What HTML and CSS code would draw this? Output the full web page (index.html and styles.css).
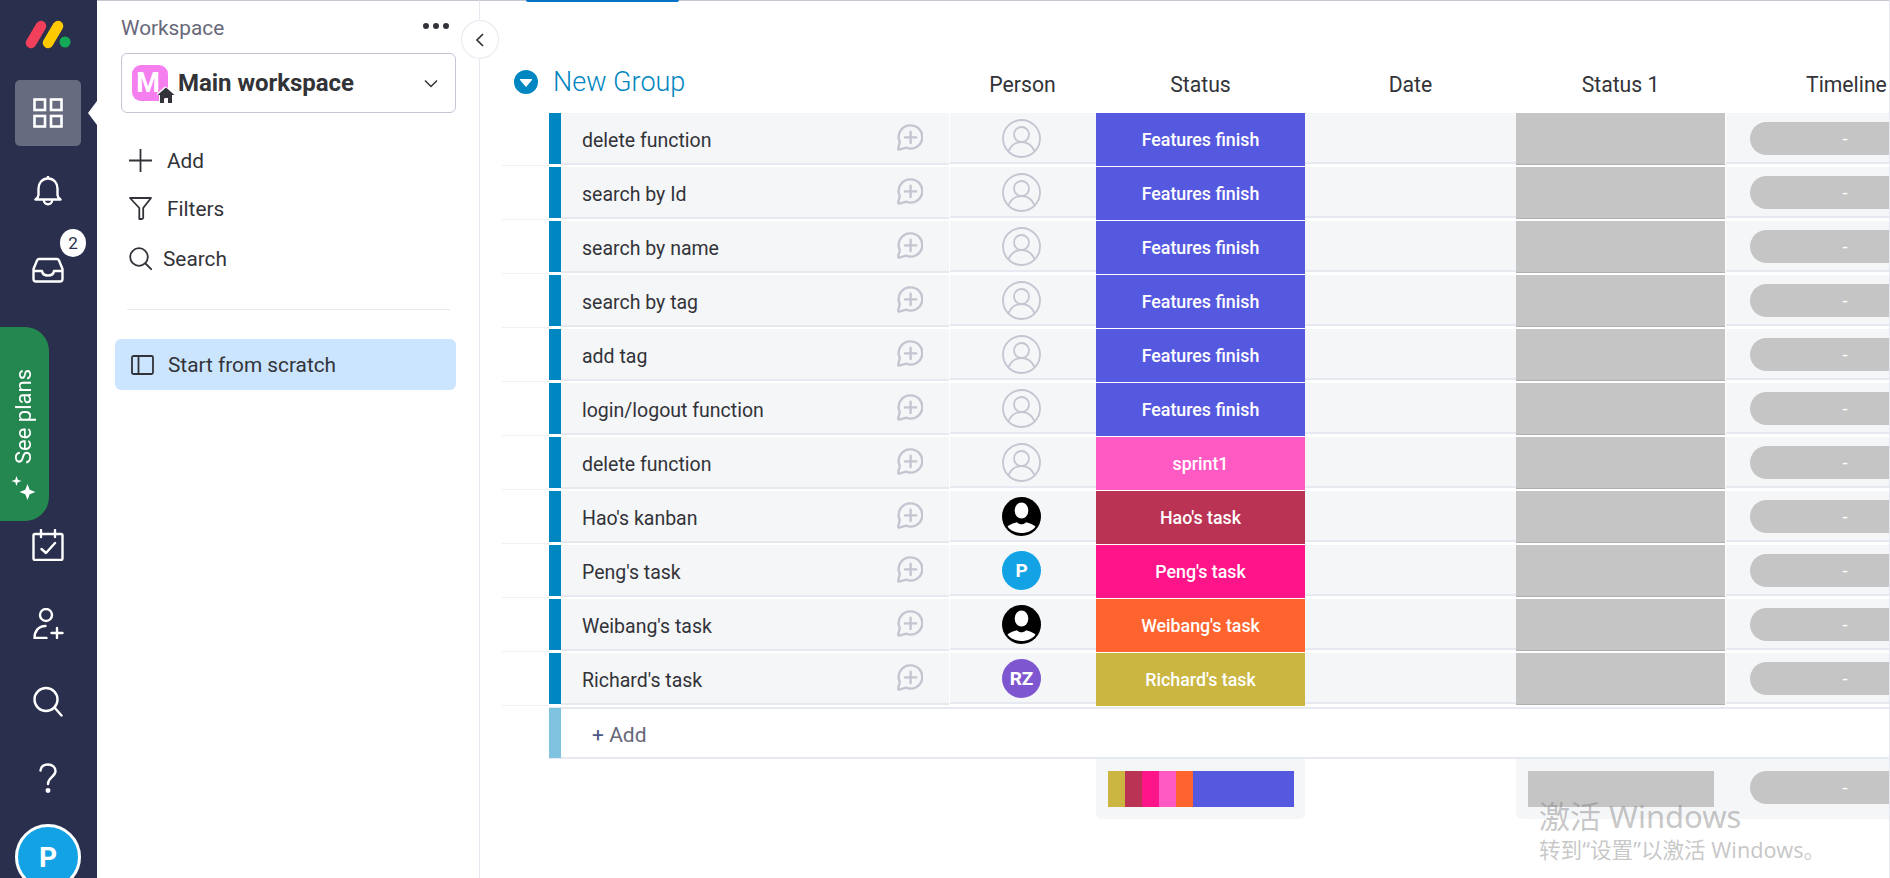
FILE: index.html
```html
<!DOCTYPE html>
<html lang="en">
<head>
<meta charset="utf-8">
<title>New Group</title>
<link rel="stylesheet" href="styles.css">
</head>
<body>
<svg class="defs" width="0" height="0" aria-hidden="true">
  <symbol id="i-comment" viewBox="0 0 27 27">
    <path d="M14.6 1.4a11.6 11.6 0 1 1-4.4 22.3L3.4 25.6c-.8.2-1.4-.4-1.2-1.1L3.8 18A11.6 11.6 0 0 1 14.6 1.4z" fill="none" stroke="#c3c6d0" stroke-width="2.4" stroke-linejoin="round"/>
    <path d="M14.6 7.8v11.2M9 13.4h11.2" stroke="#c3c6d0" stroke-width="2.4" stroke-linecap="round"/>
  </symbol>
  <symbol id="i-empty" viewBox="0 0 39 39">
    <circle cx="19.5" cy="19.5" r="18.5" fill="none" stroke="#c3c6d0" stroke-width="1.8"/>
    <circle cx="19.5" cy="15.5" r="7.5" fill="none" stroke="#c3c6d0" stroke-width="1.8"/>
    <path d="M6.5 32c3-6.500 8-9 13-9s10 2.500 13 9" fill="none" stroke="#c3c6d0" stroke-width="1.8"/>
  </symbol>
  <symbol id="i-photo" viewBox="0 0 39 39">
    <circle cx="19.500" cy="19.500" r="19.500" fill="#000"/>
    <ellipse cx="19.500" cy="13.500" rx="6.800" ry="8" fill="#fff"/>
    <path d="M5.500 29.500C9 27 13.500 25.500 15 25.300c2.500 2.700 6.500 2.700 9 0 1.500.2 6 1.700 9.500 4.200C31 33.500 25.500 36 19.500 36S8 33.500 5.500 29.500z" fill="#fff"/>
  </symbol>
</svg>

<div class="app">
  <nav class="rail">
    <svg class="logo" width="48" height="30" viewBox="0 0 48 30">
      <path d="M7 24L17 7" stroke="#f2405b" stroke-width="10.500" stroke-linecap="round"/>
      <path d="M24 24L34 7" stroke="#ffcb00" stroke-width="10.500" stroke-linecap="round"/>
      <circle cx="41" cy="23" r="5.500" fill="#14aa55"/>
    </svg>
    <div class="rail-item active">
      <svg width="30" height="30" viewBox="0 0 30 30" fill="none" stroke="#fff" stroke-width="2.600">
        <rect x="1.500" y="1.500" width="10.500" height="10.500"/><rect x="18" y="1.500" width="10.500" height="10.500"/>
        <rect x="1.500" y="18" width="10.500" height="10.500"/><rect x="18" y="18" width="10.500" height="10.500"/>
      </svg>
    </div>
    <div class="rail-item bell">
      <svg width="28" height="32" viewBox="0 0 28 32" fill="none" stroke="#fff" stroke-width="2.400" stroke-linejoin="round">
        <path d="M14 3.500c-6 0-9.500 4.500-9.500 10V20c0 1.500-1 3-3 4.500h25c-2-1.500-3-3-3-4.500v-6.500c0-5.500-3.500-10-9.500-10z"/>
        <path d="M14 1v2.500M9.800 24.800c0 6 8.400 6 8.400 0"/>
      </svg>
    </div>
    <div class="rail-item inbox">
      <svg width="32" height="26" viewBox="0 0 32 26" fill="none" stroke="#fff" stroke-width="2.400" stroke-linejoin="round">
        <path d="M7 2h18c1 0 1.500.5 2 1.500L30.500 12v10c0 1.500-1 2.500-2.500 2.500H4c-1.500 0-2.500-1-2.500-2.500V12L5 3.500C5.500 2.500 6 2 7 2z"/>
        <path d="M1.500 14h8.500c.5 3.500 2.500 4.500 6 4.500s5.500-1 6-4.500h8.500"/>
      </svg>
      <span class="badge">2</span>
    </div>
    <div class="plans">
      <span class="plans-text">See plans</span>
      <svg width="25" height="25" viewBox="0 0 25 25" fill="#fff">
        <path d="M16.500 8l2.200 5.800 5.800 2.200-5.800 2.200-2.200 5.800-2.200-5.800-5.800-2.200 5.800-2.200z"/>
        <path d="M5.500 0l1.300 3.700 3.700 1.300-3.700 1.300-1.300 3.700-1.300-3.700L.5 5l3.700-1.300z"/>
      </svg>
    </div>
    <div class="rail-item calendar">
      <svg width="32" height="32" viewBox="0 0 32 32" fill="none" stroke="#fff" stroke-width="2.400" stroke-linecap="round" stroke-linejoin="round">
        <rect x="1.500" y="5" width="29" height="26" rx="1.500"/>
        <path d="M9 1v7M23 1v7M9.500 20l4.500 4 9-10" />
      </svg>
    </div>
    <div class="rail-item invite">
      <svg width="31" height="31" viewBox="0 0 31 31" fill="none" stroke="#fff" stroke-width="2.400" stroke-linecap="round">
        <circle cx="13" cy="7" r="6"/>
        <path d="M1.500 30c0-7 4-12 11-12M2 30h11.500M24 20v10M18.500 25h11"/>
      </svg>
    </div>
    <div class="rail-item find">
      <svg width="30" height="31" viewBox="0 0 30 31" fill="none" stroke="#fff" stroke-width="2.400" stroke-linecap="round">
        <circle cx="13" cy="13.500" r="11.500"/><path d="M21.500 21.500l7 8"/>
      </svg>
    </div>
    <div class="rail-item help">
      <svg width="18" height="30" viewBox="0 0 18 30" fill="none" stroke="#fff" stroke-width="2.400" stroke-linecap="round">
        <path d="M1.500 7.500C2 3.500 5 1.500 9 1.500c4.500 0 7.500 3 7.500 6.500 0 6-7.500 6-7.500 13"/>
        <circle cx="9" cy="27.500" r="1.300" fill="#fff"/>
      </svg>
    </div>
    <div class="me">P</div>
  </nav>

  <aside class="side">
    <div class="side-head">
      <span class="side-title">Workspace</span>
      <span class="dots"><i></i><i></i><i></i></span>
    </div>
    <div class="picker">
      <span class="ws-icon">M
        <svg class="ws-home" width="18" height="16" viewBox="0 0 18 16">
          <path d="M9 .5L17.500 8H15v8h-4v-5H7v5H3V8H.5z" fill="#323338"/>
        </svg>
      </span>
      <span class="ws-name">Main workspace</span>
      <svg class="ws-chev" width="14" height="9" viewBox="0 0 14 9" fill="none" stroke="#323338" stroke-width="1.500"><path d="M1 1.500l6 6 6-6"/></svg>
    </div>
    <ul class="actions">
      <li class="action">
        <svg width="23" height="23" viewBox="0 0 23 23" stroke="#323338" stroke-width="1.800"><path d="M11.500 0v23M0 11.500h23"/></svg>
        <span>Add</span>
      </li>
      <li class="action">
        <svg width="23" height="23" viewBox="0 0 23 23" fill="none" stroke="#323338" stroke-width="1.800" stroke-linejoin="round"><path d="M1 1h21l-7.800 10v9.500c0 1-.5 1.500-1.500 1.500h-2.400V11z"/></svg>
        <span>Filters</span>
      </li>
      <li class="action action-search">
        <svg width="23" height="23" viewBox="0 0 23 23" fill="none" stroke="#323338" stroke-width="1.800" stroke-linecap="round"><circle cx="10" cy="10" r="8.800"/><path d="M16.500 16.500l6 6"/></svg>
        <span>Search</span>
      </li>
    </ul>
    <div class="divider"></div>
    <div class="board">
      <svg width="23" height="20" viewBox="0 0 23 20" fill="none" stroke="#323338" stroke-width="1.800"><rect x="1" y="1" width="21" height="18" rx="1.500"/><path d="M7.500 1v18"/></svg>
      <span>Start from scratch</span>
    </div>
    <button class="collapse" type="button" aria-label="Collapse">
      <svg width="10" height="14" viewBox="0 0 10 14" fill="none" stroke="#323338" stroke-width="1.700"><path d="M8 1L2 7l6 6"/></svg>
    </button>
  </aside>

  <main class="board-main">
    <div class="tab-mark"></div>
    <header class="group-head">
      <div class="group-label">
        <svg width="24" height="24" viewBox="0 0 24 24"><circle cx="12" cy="12" r="12" fill="#0086c0"/><path d="M6.500 9.500h11L12 16z" fill="#fff" stroke="#fff" stroke-width="1.200" stroke-linejoin="round"/></svg>
        <span class="group-name">New Group</span>
      </div>
      <span class="col">Person</span>
      <span class="col">Status</span>
      <span class="col">Date</span>
      <span class="col">Status 1</span>
      <span class="col">Timeline</span>
    </header>

    <div class="row">
      <div class="gutter"></div><div class="bar"></div>
      <div class="name"><span>delete function</span><svg width="27" height="27"><use href="#i-comment"/></svg></div>
      <div class="person"><svg width="39" height="39"><use href="#i-empty"/></svg></div>
      <div class="status s-feat">Features finish</div>
      <div class="date"></div><div class="grey"></div>
      <div class="time"><span class="pill">-</span></div>
    </div>
    <div class="row">
      <div class="gutter"></div><div class="bar"></div>
      <div class="name"><span>search by Id</span><svg width="27" height="27"><use href="#i-comment"/></svg></div>
      <div class="person"><svg width="39" height="39"><use href="#i-empty"/></svg></div>
      <div class="status s-feat">Features finish</div>
      <div class="date"></div><div class="grey"></div>
      <div class="time"><span class="pill">-</span></div>
    </div>
    <div class="row">
      <div class="gutter"></div><div class="bar"></div>
      <div class="name"><span>search by name</span><svg width="27" height="27"><use href="#i-comment"/></svg></div>
      <div class="person"><svg width="39" height="39"><use href="#i-empty"/></svg></div>
      <div class="status s-feat">Features finish</div>
      <div class="date"></div><div class="grey"></div>
      <div class="time"><span class="pill">-</span></div>
    </div>
    <div class="row">
      <div class="gutter"></div><div class="bar"></div>
      <div class="name"><span>search by tag</span><svg width="27" height="27"><use href="#i-comment"/></svg></div>
      <div class="person"><svg width="39" height="39"><use href="#i-empty"/></svg></div>
      <div class="status s-feat">Features finish</div>
      <div class="date"></div><div class="grey"></div>
      <div class="time"><span class="pill">-</span></div>
    </div>
    <div class="row">
      <div class="gutter"></div><div class="bar"></div>
      <div class="name"><span>add tag</span><svg width="27" height="27"><use href="#i-comment"/></svg></div>
      <div class="person"><svg width="39" height="39"><use href="#i-empty"/></svg></div>
      <div class="status s-feat">Features finish</div>
      <div class="date"></div><div class="grey"></div>
      <div class="time"><span class="pill">-</span></div>
    </div>
    <div class="row">
      <div class="gutter"></div><div class="bar"></div>
      <div class="name"><span>login/logout function</span><svg width="27" height="27"><use href="#i-comment"/></svg></div>
      <div class="person"><svg width="39" height="39"><use href="#i-empty"/></svg></div>
      <div class="status s-feat">Features finish</div>
      <div class="date"></div><div class="grey"></div>
      <div class="time"><span class="pill">-</span></div>
    </div>
    <div class="row">
      <div class="gutter"></div><div class="bar"></div>
      <div class="name"><span>delete function</span><svg width="27" height="27"><use href="#i-comment"/></svg></div>
      <div class="person"><svg width="39" height="39"><use href="#i-empty"/></svg></div>
      <div class="status s-sprint">sprint1</div>
      <div class="date"></div><div class="grey"></div>
      <div class="time"><span class="pill">-</span></div>
    </div>
    <div class="row">
      <div class="gutter"></div><div class="bar"></div>
      <div class="name"><span>Hao's kanban</span><svg width="27" height="27"><use href="#i-comment"/></svg></div>
      <div class="person"><svg width="39" height="39"><use href="#i-photo"/></svg></div>
      <div class="status s-hao">Hao's task</div>
      <div class="date"></div><div class="grey"></div>
      <div class="time"><span class="pill">-</span></div>
    </div>
    <div class="row">
      <div class="gutter"></div><div class="bar"></div>
      <div class="name"><span>Peng's task</span><svg width="27" height="27"><use href="#i-comment"/></svg></div>
      <div class="person"><span class="avatar av-p">P</span></div>
      <div class="status s-peng">Peng's task</div>
      <div class="date"></div><div class="grey"></div>
      <div class="time"><span class="pill">-</span></div>
    </div>
    <div class="row">
      <div class="gutter"></div><div class="bar"></div>
      <div class="name"><span>Weibang's task</span><svg width="27" height="27"><use href="#i-comment"/></svg></div>
      <div class="person"><svg width="39" height="39"><use href="#i-photo"/></svg></div>
      <div class="status s-wei">Weibang's task</div>
      <div class="date"></div><div class="grey"></div>
      <div class="time"><span class="pill">-</span></div>
    </div>
    <div class="row">
      <div class="gutter"></div><div class="bar"></div>
      <div class="name"><span>Richard's task</span><svg width="27" height="27"><use href="#i-comment"/></svg></div>
      <div class="person"><span class="avatar av-r">RZ</span></div>
      <div class="status s-rich">Richard's task</div>
      <div class="date"></div><div class="grey"></div>
      <div class="time"><span class="pill">-</span></div>
    </div>

    <div class="add-row">
      <div class="add-bar"></div>
      <div class="add-text"><b>+</b> Add</div>
    </div>

    <div class="summary">
      <div class="sum-status">
        <div class="stack">
          <i class="s-rich"></i><i class="s-hao"></i><i class="s-peng"></i><i class="s-sprint"></i><i class="s-wei"></i><i class="s-feat wide"></i>
        </div>
      </div>
      <div class="sum-date"></div>
      <div class="sum-rest">
        <div class="sum-grey"></div>
        <div class="time"><span class="pill">-</span></div>
      </div>
    </div>
  </main>
</div>

<div class="watermark">
  <div class="wm-1">激活 Windows</div>
  <div class="wm-2">转到“设置”以激活 Windows。</div>
</div>
</body>
</html>
```

FILE: styles.css
```css
* { box-sizing: border-box; }
html, body { margin: 0; height: 100%; overflow: hidden; background: #fff; }
body { font-family: Roboto, "Noto Sans", sans-serif; color: #323338; }
.defs { position: absolute; }
.app { display: flex; height: 878px; }

/* left rail */
.rail { width: 97px; flex: none; background: #292f4c; position: relative; display: flex; flex-direction: column; align-items: center; overflow: hidden; }
.logo { flex: none; margin-top: 19px; margin-left: -2px; }
.rail-item { flex: none; display: flex; align-items: center; justify-content: center; position: relative; width: 66px; margin-right: 1px; }
.rail-item.active { height: 66px; margin-top: 31px; background: #676b80; border-radius: 5px; }
.rail-item.active::after { content: ""; position: absolute; left: 73px; top: 21px; border: 12px solid transparent; border-left: 0; border-right: 9px solid #fff; }
.bell { height: 32px; margin-top: 29px; }
.inbox { height: 26px; margin-top: 50px; }
.badge { position: absolute; left: 45px; top: -28px; width: 26px; height: 28px; border-radius: 50%; background: #fff; color: #292f4c; font-size: 17px; display: flex; align-items: center; justify-content: center; }
.plans { position: absolute; left: 0; top: 327px; width: 49px; height: 194px; background: #258750; border-radius: 0 24px 24px 0; display: flex; flex-direction: column; align-items: center; justify-content: flex-end; padding: 0 3px 20px 0; color: #fff; }
.plans-text { writing-mode: vertical-rl; transform: rotate(180deg); font-size: 22px; margin-bottom: 12px; }
.calendar { margin-top: 246px; height: 32px; }
.invite { margin-top: 47px; height: 31px; }
.find { margin-top: 47px; height: 31px; }
.help { margin-top: 46px; height: 30px; }
.me { width: 66px; height: 66px; flex: none; margin: 31px 1px 0 0; border-radius: 50%; background: #13a3e5; border: 3px solid #fff; color: #fff; display: flex; align-items: center; justify-content: center; font-size: 28px; font-weight: 700; }

/* workspace sidebar */
.side { width: 383px; flex: none; position: relative; border-right: 1px solid #e6e9ef; border-top: 1px solid #c5c7d0; padding: 0 23px 0 18px; }
.side-head { display: flex; align-items: center; justify-content: space-between; margin-top: 11px; height: 32px; padding: 0 7px 0 6px; }
.side-title { font-size: 20.800px; color: #676879; }
.dots { display: flex; gap: 4px; margin-top: -5px; }
.dots i { width: 6px; height: 6px; border-radius: 50%; background: #323338; }
.picker { margin: 9px 0 0 6px; height: 60px; border: 1px solid #c3c6d4; border-radius: 6px; display: flex; align-items: center; padding-left: 10px; }
.ws-icon { position: relative; width: 36px; height: 36px; border-radius: 9px; background: #f67ff0; color: #fff; font-size: 27px; font-weight: 700; display: flex; align-items: center; justify-content: center; flex: none; padding-right: 4px; }
.ws-home { position: absolute; left: 25px; top: 22px; filter: drop-shadow(0 -1px 0 #fff) drop-shadow(-1px 0 0 #fff); }
.ws-name { margin-left: 10px; font-size: 24px; font-weight: 700; letter-spacing: -.05px; }
.ws-chev { margin-left: auto; margin-right: 17px; }
.actions { list-style: none; margin: 36px 0 0; padding: 0 0 0 14px; }
.action { display: flex; align-items: center; gap: 15px; height: 23px; margin-bottom: 25px; font-size: 20.800px; }
.action-search { gap: 11px; margin-top: 27px; }
.divider { height: 1px; background: #e6e9ef; margin: 39px 6px 0 12px; }
.board { margin-top: 29px; height: 51px; background: #cce5ff; border-radius: 6px; display: flex; align-items: center; gap: 14px; padding-left: 16px; font-size: 20.800px; }
.collapse { position: absolute; left: 364px; top: 19px; width: 38px; height: 39px; padding: 0; border: 1px solid #e6e9ef; border-radius: 50%; background: #fff; display: flex; align-items: center; justify-content: center; z-index: 2; }

/* board */
.board-main { flex: 1; min-width: 0; position: relative; overflow: hidden; box-shadow: inset 0 1px #c5c7d0; border-right: 1px solid #e6e9ef; }
.tab-mark { position: absolute; left: 46px; top: 0; width: 153px; height: 2px; background: #0073c4; border-radius: 0 0 3px 3px; }
.group-head { display: grid; grid-template-columns: 469px 147px 209px 211px 209px 1fr; height: 113px; align-items: start; }
.group-label { display: flex; align-items: center; gap: 15px; margin: 70px 0 0 34px; }
.group-name { font-size: 27px; font-weight: 300; color: #0086c0; line-height: 24px; }
.col { margin-top: 72px; font-size: 21.200px; line-height: 26px; text-align: center; }
.col:last-child { text-align: left; padding-left: 81px; }

.row { display: grid; grid-template-columns: 69px 12px 388px 147px 209px 211px 209px 1fr; height: 52px; margin-bottom: 2px; position: relative; }
.gutter { margin-left: 22px; height: 53px; border-bottom: 1px solid #f0f1f5; }
.bar { background: #0086c0; height: 51px; }
.name { background: #f5f6f8; border-bottom: 2px solid #e6e9ef; height: 52px; display: flex; align-items: center; justify-content: space-between; padding: 0 26px 0 21px; font-size: 19.500px; }
.name span { padding-top: 5px; }
.name svg { margin-top: -1px; }
.person { background: #f5f6f8; border-bottom: 2px solid #e6e9ef; height: 51px; margin-left: 1px; display: flex; align-items: center; justify-content: center; padding: 2px 3px 0 0; }
.status { color: #fff; font-size: 17.800px; font-weight: 500; display: flex; align-items: center; justify-content: center; padding-bottom: 1px; }
.date { background: #f5f6f8; border-bottom: 2px solid #e6e9ef; height: 51px; }
.grey { background: #c4c5c4; border-bottom: 1px solid #aeb0ae; height: 52px; }
.time { background: #f5f6f8; border-bottom: 2px solid #e6e9ef; height: 51px; margin-left: 1px; padding: 9px 0 0 24px; }
.pill { display: flex; align-items: center; justify-content: center; width: 190px; height: 33px; background: #c4c5c4; border-radius: 17px 0 0 17px; color: #fff; font-size: 18px; }
.s-feat { background: #5559df; }
.s-sprint { background: #ff5ac4; }
.s-hao { background: #bb3354; }
.s-peng { background: #ff158a; }
.s-wei { background: #ff642e; }
.s-rich { background: #cab641; }
.avatar { width: 39px; height: 39px; border-radius: 50%; color: #fff; font-weight: 700; display: flex; align-items: center; justify-content: center; font-size: 19px; }
.av-p { background: #13a3e5; }
.av-r { background: #7e56d0; }

.add-row { display: flex; height: 52px; margin-left: 69px; border-top: 2px solid #e6e9ef; border-bottom: 2px solid #e6e9ef; }
.add-bar { width: 12px; margin: -1px 0; background: #7fc3e0; flex: none; }
.add-text { margin: 14px 0 0 31px; font-size: 21px; color: #676879; }
.add-text b { font-weight: 400; color: #4b5a85; }
.summary { display: flex; height: 60px; margin-left: 616px; }
.sum-status { flex: none; width: 209px; background: #f5f6f8; border-radius: 0 0 6px 6px; padding: 12px 11px 0 12px; }
.stack { display: flex; height: 36px; }
.stack i { width: 17px; }
.stack .wide { flex: 1; }
.sum-date { flex: none; width: 211px; }
.sum-rest { flex: 1; min-width: 0; background: #f5f6f8; border-radius: 0 0 0 6px; padding: 12px 0 0 12px; display: flex; }
.sum-grey { width: 186px; height: 36px; background: #c4c5c4; flex: none; }
.sum-rest .time { flex: none; background: none; border: 0; margin: 0; padding: 0 0 0 36px; }

/* OS overlay */
.watermark { position: absolute; left: 1539px; top: 796px; color: rgba(120, 120, 120, .42); font-family: "Noto Sans", "Noto Sans CJK SC", sans-serif; pointer-events: none; white-space: nowrap; }
.wm-1 { font-size: 31px; line-height: 40px; }
.wm-2 { font-size: 21.600px; line-height: 28px; }
```
